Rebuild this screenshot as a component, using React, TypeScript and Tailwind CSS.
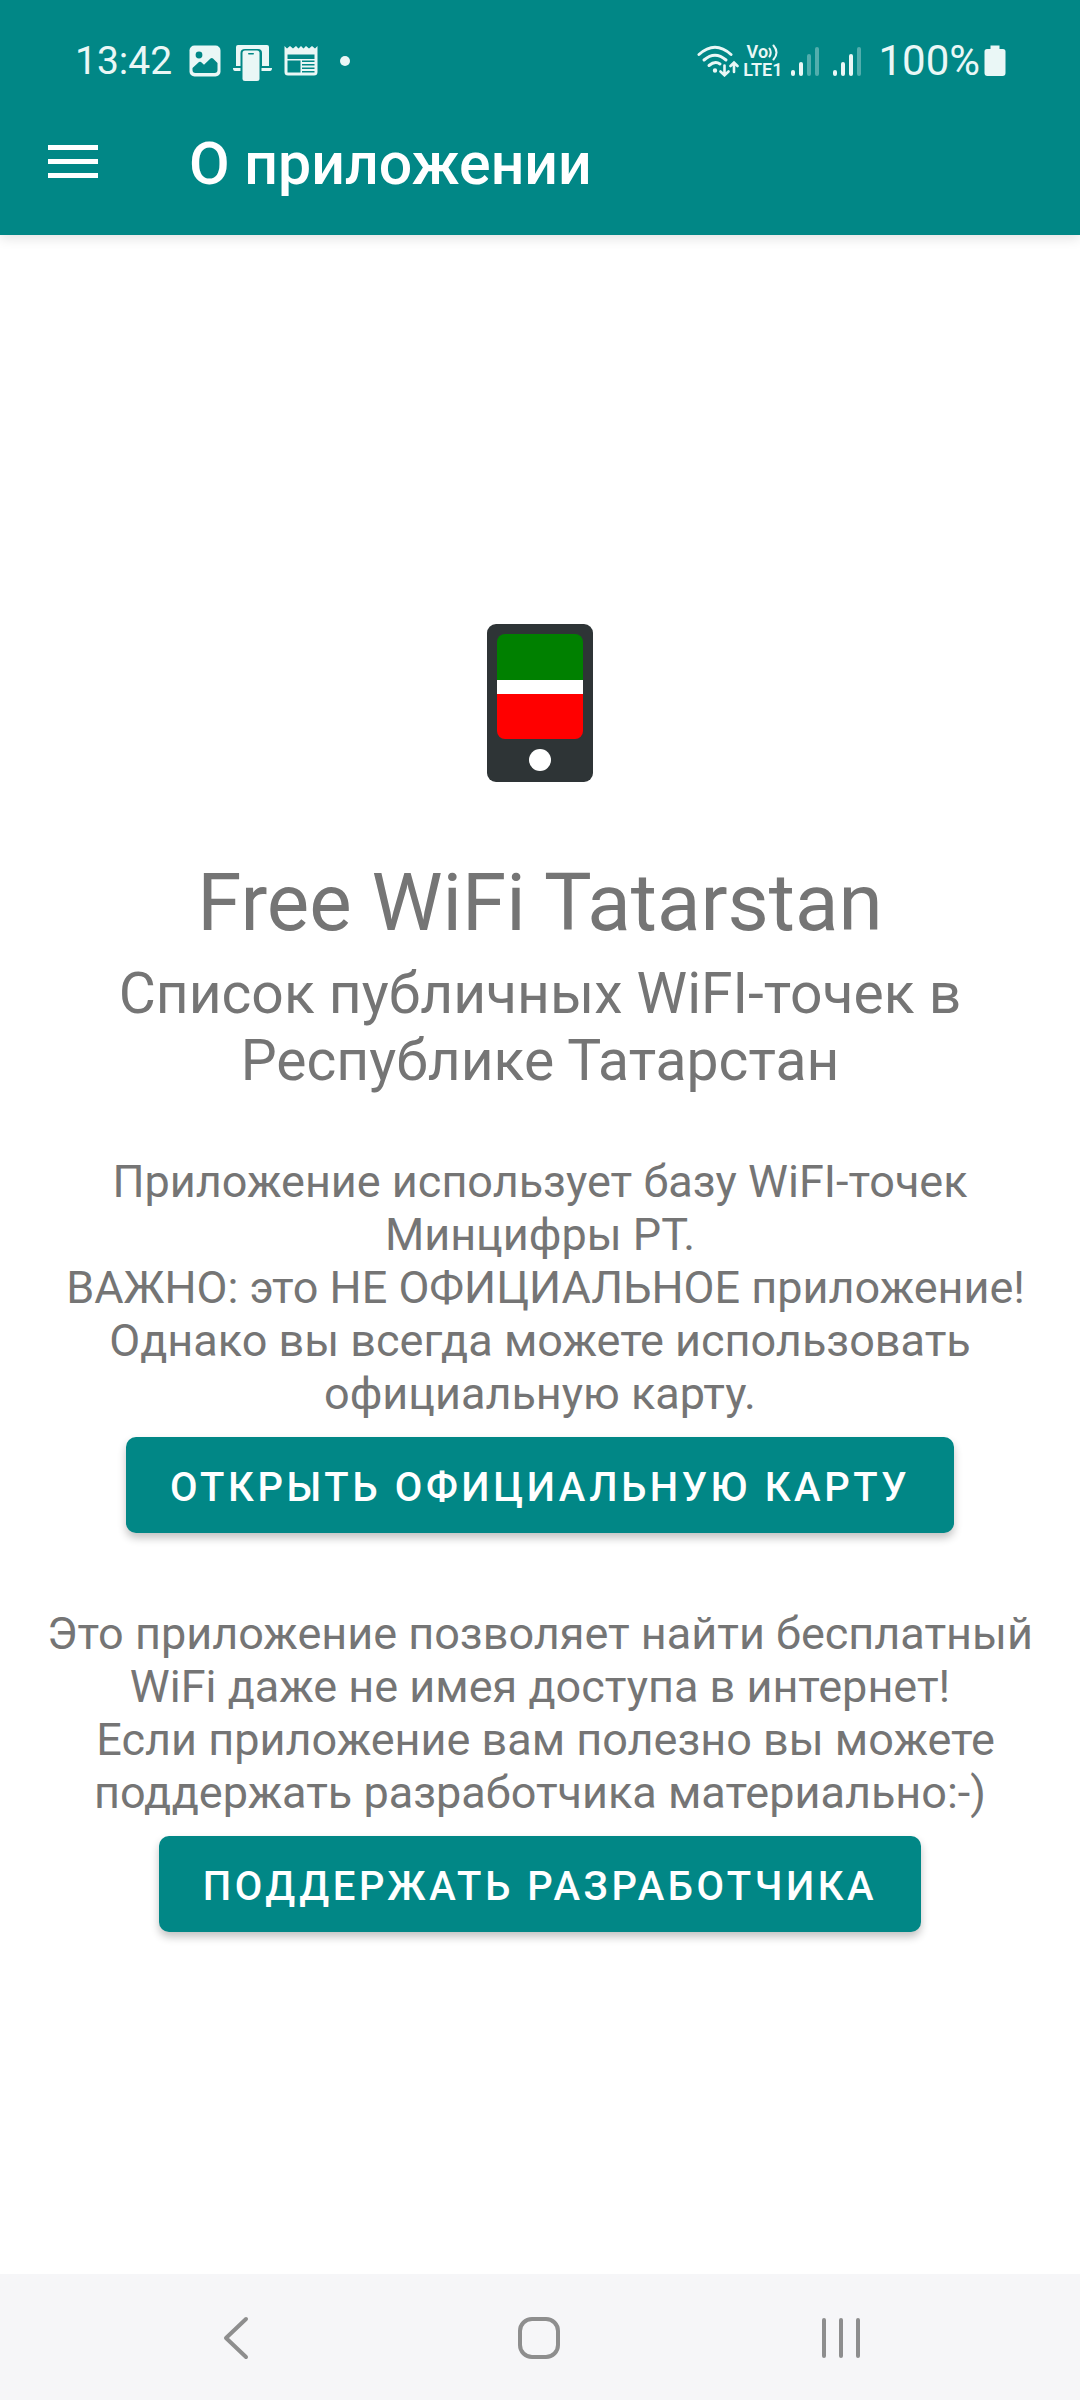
import React from "react";

function PictureIcon() {
  return (
    <svg width="32" height="32" viewBox="0 0 32 32" aria-hidden="true">
      <rect x="0.5" y="0.5" width="31" height="31" rx="5" fill="#eaf7f6" />
      <circle cx="10" cy="10" r="3.4" fill="#018786" />
      <path d="M3.500 23 L10 17 Q11 16.300 12 17 L15 19.800 L21.500 13.500 Q22.800 12.500 24 13.500 L28.500 18 V25 Q28.500 28 25.500 28 H6.500 Q3.500 28 3.500 25 Z" fill="#018786" />
    </svg>
  );
}

function DeviceIcon() {
  return (
    <svg width="39" height="36" viewBox="0 0 39 36" aria-hidden="true">
      <path d="M5 0 H34 Q36 0 36 2 V21 H29 V8 Q29 4 25 4 H12 Q7.500 4 7.500 8 V21 H3 V2 Q3 0 5 0 Z" fill="#eaf7f6" />
      <path d="M0 23 H7.500 V26 H2 Q0 26 0 23 Z M28.500 23 H39 Q39 26 37 26 H28.500 Z" fill="#eaf7f6" />
      <rect x="9.500" y="5.500" width="17" height="30.500" rx="2.500" fill="#eaf7f6" />
      <rect x="15" y="8" width="6" height="1.6" rx="0.8" fill="#018786" />
    </svg>
  );
}

function NewsIcon() {
  return (
    <svg width="34" height="32" viewBox="0 -1 34 32" aria-hidden="true">
      <path
        d="M0.5 0 L3 2.5 L6 0 L9 2.5 L12 0 L14.5 2.5 L17 0 L19.5 2.5 L22 0 L25 2.5 L28 0 L31 2.5 L33.5 0 V26 Q33.5 29.5 30 29.5 H4 Q0.5 29.5 0.5 26 Z"
        fill="#eaf7f6"
      />
      <path d="M3.5 8.5 H30.5 V13 H3.5 Z M3.5 14.5 H16.5 V26.5 H3.5 Z" fill="#018786" />
      <path d="M18 15.3 H30.5 M18 18.8 H30.5 M18 22.3 H30.5 M18 25.8 H30.5" stroke="#018786" strokeWidth="1.6" />
    </svg>
  );
}

function WifiIcon() {
  return (
    <svg width="42" height="32" viewBox="0 0 42 32" fill="none" stroke="#eaf7f6" strokeWidth="3" strokeLinecap="round" aria-label="Wi-Fi">
      <path d="M2 9.5 Q18 -5 34 9.5" />
      <path d="M7 15 Q18 5.5 29 15" />
      <path d="M12 20.5 Q18 15.5 23 19" />
      <circle cx="18" cy="25.500" r="1" fill="#eaf7f6" strokeWidth="2.4" />
      <path d="M27.5 20.5 V30 M23.500 26.5 L27.5 30.3 L31.500 26.500" strokeWidth="2.6" />
      <path d="M37 27 V18 M33.500 21 L37 17.5 L40.500 21" strokeWidth="2.6" />
    </svg>
  );
}

function Signal({ level }: { level: number }) {
  const bars = [6, 14, 22, 29];
  return (
    <svg width="28" height="30" viewBox="0 0 28 30" aria-label="Signal">
      {bars.map((h, i) => (
        <rect key={h} x={i * 8} y={30 - h} width="4" height={h} rx="2" fill="#eaf7f6" opacity={i < level ? 1 : 0.35} />
      ))}
    </svg>
  );
}

function VoLte() {
  return (
    <div className="flex flex-col items-center text-[18px] leading-[18px] font-semibold text-[#eaf7f6]">
      <div className="flex items-center">
        <span>Vo</span>
        <svg width="11" height="17" viewBox="0 0 11 17" fill="none" stroke="#eaf7f6" strokeWidth="2" strokeLinecap="round" aria-hidden="true">
          <path d="M1.500 4.500 Q4 8.500 1.500 12.500 M5.500 1.500 Q11.500 8.500 5.500 15.500" />
        </svg>
      </div>
      <span>LTE1</span>
    </div>
  );
}

function BatteryIcon() {
  return (
    <svg width="22" height="32" viewBox="0 0 22 32" aria-label="Battery">
      <path d="M6.500 0.500 H15.500 V4 H19 Q21.500 4 21.500 6.500 V28 Q21.500 31 18.500 31 H3.500 Q0.500 31 0.500 28 V6.500 Q0.500 4 3 4 H6.500 Z" fill="#eaf7f6" />
    </svg>
  );
}

function StatusBar() {
  return (
    <div className="flex h-[90px] items-center justify-between pt-[32px] pr-[74px] pl-[75px] text-[#eaf7f6]">
      <div className="flex items-center">
        <span className="text-[39px] leading-[46px]">13:42</span>
        <div className="mt-1 ml-[17px] flex items-start gap-3">
          <PictureIcon />
          <DeviceIcon />
          <NewsIcon />
        </div>
        <span className="ml-[22px] size-[10px] rounded-full bg-[#eaf7f6]" />
      </div>
      <div className="flex items-center">
        <WifiIcon />
        <div className="ml-1">
          <VoLte />
        </div>
        <div className="ml-[9px] flex gap-[14px]">
          <Signal level={2} />
          <Signal level={3} />
        </div>
        <span className="mr-1 ml-[17px] text-[42px] leading-[46px]">100%</span>
        <BatteryIcon />
      </div>
    </div>
  );
}

function PhoneLogo() {
  return (
    <svg width="106" height="158" viewBox="0 0 106 158" role="img" aria-label="Free WiFi Tatarstan">
      <rect width="106" height="158" rx="9" fill="#2e3436" />
      <clipPath id="screen">
        <rect x="10" y="10" width="86" height="105" rx="8" />
      </clipPath>
      <g clipPath="url(#screen)">
        <rect x="10" y="10" width="86" height="46" fill="#008000" />
        <rect x="10" y="56" width="86" height="14" fill="#fff" />
        <rect x="10" y="70" width="86" height="45" fill="#f00" />
      </g>
      <circle cx="53" cy="136" r="11" fill="#fff" />
    </svg>
  );
}

function ActionButton({ children }: { children: React.ReactNode }) {
  return (
    <button
      type="button"
      className="h-24 rounded-[10px] bg-[#018786] px-[44px] pt-[6px] text-[40px] leading-[46px] font-medium tracking-[0.09em] text-white uppercase shadow-[0_5px_8px_rgba(0,0,0,0.24)]"
    >
      {children}
    </button>
  );
}

export default function App() {
  return (
    <div className="flex min-h-screen flex-col bg-white font-['Roboto',sans-serif]">
      <header className="relative bg-[#018786] shadow-[0_3px_12px_rgba(0,0,0,0.12)]">
        <StatusBar />
        <div className="flex h-[145px] items-center pt-[2px] pl-12">
          <button type="button" aria-label="Меню" className="mb-1 flex w-[50px] flex-col gap-[9px]">
            <span className="h-[5px] w-full bg-white" />
            <span className="h-[5px] w-full bg-white" />
            <span className="h-[5px] w-full bg-white" />
          </button>
          <h1 className="ml-[91px] text-[59px] leading-[66px] font-medium text-white">О приложении</h1>
        </div>
      </header>

      <main className="flex flex-1 flex-col items-center px-[45px] pt-[389px] text-center text-[#757575]">
        <PhoneLogo />
        <h2 className="mt-[74px] text-[80px] leading-[94px]">Free WiFi Tatarstan</h2>
        <p className="mt-[10px] text-[57px] leading-[67px]">Список публичных WiFI-точек в Республике Татарстан</p>
        <p className="mt-[61px] text-[45px] leading-[53px]">
          Приложение использует базу WiFI-точек Минцифры РТ.
          <br />
          &nbsp;ВАЖНО: это НЕ ОФИЦИАЛЬНОЕ приложение! Однако вы всегда можете использовать официальную карту.
        </p>
        <div className="mt-[17px]">
          <ActionButton>Открыть официальную карту</ActionButton>
        </div>
        <p className="mt-[74px] text-[45px] leading-[53px]">
          Это приложение позволяет найти бесплатный WiFi даже не имея доступа в интернет!
          <br />
          &nbsp;Если приложение вам полезно вы можете поддержать разработчика материально:-)
        </p>
        <div className="mt-[17px]">
          <ActionButton>Поддержать разработчика</ActionButton>
        </div>
      </main>

      <nav className="flex h-[126px] items-center justify-between bg-[#f6f6f8] pt-[2px] pr-[213px] pl-[210px]">
        <button type="button" aria-label="Назад" className="flex w-[52px] justify-center">
          <svg width="26" height="44" viewBox="0 0 26 44" fill="none" stroke="#8e8e8e" strokeWidth="4" strokeLinecap="round" strokeLinejoin="round">
            <path d="M23 3 L3 22 L23 41" />
          </svg>
        </button>
        <button type="button" aria-label="Домой" className="flex w-[52px] justify-center">
          <svg width="44" height="44" viewBox="0 0 44 44" fill="none" stroke="#8e8e8e" strokeWidth="4">
            <rect x="3" y="3" width="38" height="38" rx="12" />
          </svg>
        </button>
        <button type="button" aria-label="Недавние" className="flex w-[52px] justify-center">
          <svg width="40" height="44" viewBox="0 0 40 44" fill="none" stroke="#8e8e8e" strokeWidth="4" strokeLinecap="round">
            <path d="M3 4 V40 M20 4 V40 M37 4 V40" />
          </svg>
        </button>
      </nav>
    </div>
  );
}
